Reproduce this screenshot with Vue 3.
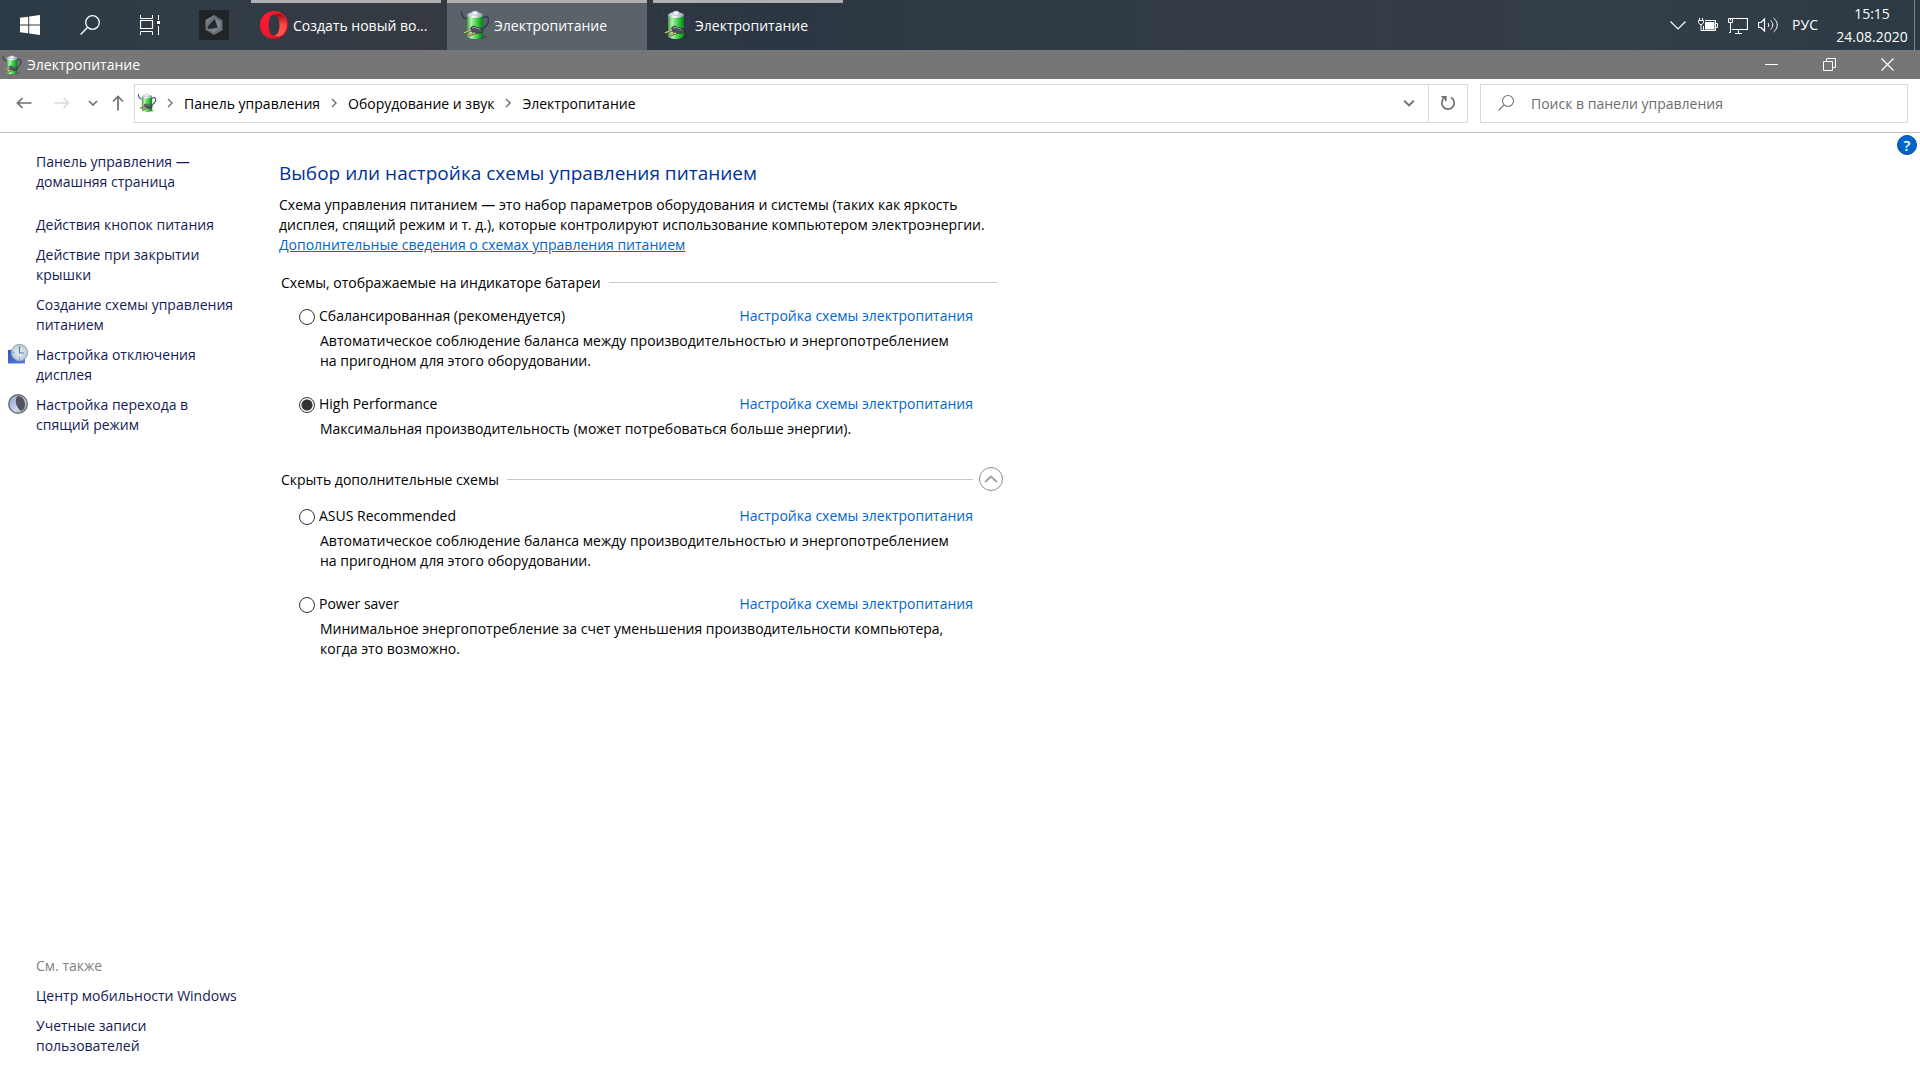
<script setup>
import { ref } from 'vue'

const selected = ref('high')
const expanded = ref(true)
const query = ref('')

const windows = [
  { id: 'opera', title: 'Создать новый во...', icon: 'i-opera' },
  { id: 'power1', title: 'Электропитание', icon: 'i-battery', active: true },
  { id: 'power2', title: 'Электропитание', icon: 'i-battery' }
]

const crumbs = ['Панель управления', 'Оборудование и звук', 'Электропитание']

const home = 'Панель управления —\nдомашняя страница'

const tasks = [
  { text: 'Действия кнопок питания' },
  { text: 'Действие при закрытии\nкрышки' },
  { text: 'Создание схемы управления\nпитанием' },
  { text: 'Настройка отключения\nдисплея', icon: 'i-display' },
  { text: 'Настройка перехода в\nспящий режим', icon: 'i-sleep' }
]

const seeAlso = ['Центр мобильности Windows', 'Учетные записи\nпользователей']

const intro = 'Схема управления питанием — это набор параметров оборудования и системы (таких как яркость\nдисплея, спящий режим и т. д.), которые контролируют использование компьютером электроэнергии.\n'

const mainPlans = [
  {
    id: 'balanced',
    name: 'Сбалансированная (рекомендуется)',
    about: 'Автоматическое соблюдение баланса между производительностью и энергопотреблением\nна пригодном для этого оборудовании.'
  },
  {
    id: 'high',
    name: 'High Performance',
    about: 'Максимальная производительность (может потребоваться больше энергии).'
  }
]

const extraPlans = [
  {
    id: 'asus',
    name: 'ASUS Recommended',
    about: 'Автоматическое соблюдение баланса между производительностью и энергопотреблением\nна пригодном для этого оборудовании.'
  },
  {
    id: 'saver',
    name: 'Power saver',
    about: 'Минимальное энергопотребление за счет уменьшения производительности компьютера,\nкогда это возможно.'
  }
]
</script>

<template>
  <div class="screen">
    <svg class="defs" width="0" height="0" aria-hidden="true">
      <defs>
        <linearGradient id="g-green" x1="0" x2="1" y1="0" y2="0">
          <stop offset="0" stop-color="#3f9a45" />
          <stop offset="0.25" stop-color="#b5f3b0" />
          <stop offset="0.5" stop-color="#5fdb62" />
          <stop offset="0.8" stop-color="#1cb02c" />
          <stop offset="1" stop-color="#0e7a1e" />
        </linearGradient>
        <linearGradient id="g-cap" x1="0" x2="1" y1="0" y2="0">
          <stop offset="0" stop-color="#9aa5b5" />
          <stop offset="0.4" stop-color="#ffffff" />
          <stop offset="1" stop-color="#8391a8" />
        </linearGradient>
        <linearGradient id="g-opera" x1="0" x2="1" y1="0" y2="1">
          <stop offset="0" stop-color="#ff1b2d" />
          <stop offset="0.6" stop-color="#f0182b" />
          <stop offset="1" stop-color="#a70014" />
        </linearGradient>
        <linearGradient id="g-opera2" x1="0" x2="0" y1="0" y2="1">
          <stop offset="0" stop-color="#a00010" />
          <stop offset="0.5" stop-color="#ff4b4b" />
          <stop offset="1" stop-color="#ff5a55" />
        </linearGradient>
        <linearGradient id="g-blue" x1="0" x2="1" y1="0" y2="1">
          <stop offset="0" stop-color="#2f55b8" />
          <stop offset="1" stop-color="#5c7ee0" />
        </linearGradient>
        <radialGradient id="g-clock">
          <stop offset="0" stop-color="#e6f1f8" />
          <stop offset="1" stop-color="#b9cfdc" />
        </radialGradient>
        <linearGradient id="g-moon" x1="0" x2="1" y1="0" y2="1">
          <stop offset="0" stop-color="#8d9cc8" />
          <stop offset="0.6" stop-color="#cbd7f5" />
          <stop offset="1" stop-color="#8a93ae" />
        </linearGradient>
        <linearGradient id="g-hex" x1="0" x2="1" y1="0" y2="1">
          <stop offset="0" stop-color="#8b939b" />
          <stop offset="0.5" stop-color="#596068" />
          <stop offset="1" stop-color="#747d86" />
        </linearGradient>
      </defs>
      <symbol id="i-battery" viewBox="0 0 28 30">
        <ellipse cx="18" cy="27" rx="8" ry="2" fill="#000" opacity="0.2" />
        <path d="M.5 1c0 4 2 7 5 8" fill="none" stroke="#363a60" stroke-width="1.6" />
        <path d="M22 8c3-3 5.500-1 5.500 2 0 5-3.500 7-7.500 9" fill="none" stroke="#363a60" stroke-width="1.6" />
        <path d="M6 5v21c0 1.600 3.500 3 8 3s8-1.400 8-3V5z" fill="url(#g-green)" />
        <ellipse cx="14" cy="5" rx="8" ry="3" fill="url(#g-cap)" />
        <path d="M11 2.500c0-2 6-2 6 0v2c0 1-6 1-6 0z" fill="#eef2fa" stroke="#8d99b0" stroke-width="0.5" />
        <path d="M9.500 18c2-2.500 4-2 6-.5l6.500 1.500c1 2-.5 4-2.500 4-3 .6-6 .5-8.500-1z" fill="#4c505c" stroke="#25272f" stroke-width="0.700" />
        <path d="M11 18l3-.5 5 2" fill="none" stroke="#9a9eaa" />
        <path d="M3 23l7-2.500M8 25.500l6-2.500" stroke="#5d4526" stroke-width="2.200" />
        <path d="M3 22.700l7-2.500M8 25.200l6-2.500" stroke="#ecc893" stroke-width="1.200" />
      </symbol>
      <symbol id="i-opera" viewBox="0 0 28 28">
        <path fill="url(#g-opera)" fill-rule="evenodd" d="M14 0a14 14 0 1 0 0 28 14 14 0 0 0 0-28zM14 3.500c3.800 0 5.600 5 5.600 10.500S17.800 24.500 14 24.500 8.800 19.500 8.800 14 10.200 3.500 14 3.500z" />
        <path fill="url(#g-opera2)" d="M14 3.500c4-2.200 7-.8 9.300 1.200a14 14 0 0 1 0 18.600c-3 2.600-6.300 3-9.300 1.200 3.800 0 5.600-5 5.600-10.500S17.800 3.500 14 3.500z" />
      </symbol>
      <symbol id="i-display" viewBox="0 0 20 20">
        <path d="M0 6l17-1v14.500H0z" fill="url(#g-blue)" />
        <circle cx="11.500" cy="8.500" r="8" fill="url(#g-clock)" stroke="#a2adb3" stroke-width="1.200" />
        <path d="M11.500 3v6H16" fill="none" stroke="#6b7f96" stroke-width="1.200" />
        <path d="M11.500 1.700v1.600M11.500 13.700v1.600M4.700 8.500h1.600" stroke="#7d92a4" />
      </symbol>
      <symbol id="i-sleep" viewBox="0 0 20 20">
        <circle cx="10" cy="10" r="9.300" fill="url(#g-moon)" stroke="#707070" stroke-width="1.400" />
        <path d="M9 2.500c5-1 8 3.500 8 7.500s-1.500 6-4 7c-4-3-7-9-4-14.500z" fill="#50535a" />
      </symbol>
      <symbol id="i-search" viewBox="0 0 20 20">
        <circle cx="12.500" cy="7.500" r="6.800" fill="none" stroke="currentColor" stroke-width="1.300" />
        <path d="M7.700 12.300L.6 19.400" stroke="currentColor" stroke-width="1.400" />
      </symbol>
      <symbol id="i-chevron" viewBox="0 0 10 6">
        <path d="M1 1l4 4 4-4" fill="none" stroke="currentColor" stroke-width="1.700" />
      </symbol>
      <symbol id="i-arrow" viewBox="0 0 16 12">
        <path d="M15.500 6H1.500M6.500 1l-5 5 5 5" fill="none" stroke="currentColor" stroke-width="1.700" />
      </symbol>
    </svg>

    <header class="taskbar">
      <button class="sys start" aria-label="Пуск">
        <svg width="20" height="20" viewBox="0 0 20 20"><path fill="#fff" d="M0 2.800L8.200 1.700v7.800H0zM9.200 1.500L20 0v9.500H9.200zM0 10.500h8.200v7.800L0 17.200zM9.200 10.500H20V20L9.200 18.500z" /></svg>
      </button>
      <button class="sys find" aria-label="Поиск">
        <svg width="20" height="20"><use href="#i-search" /></svg>
      </button>
      <button class="sys view" aria-label="Представление задач">
        <svg width="20" height="20" viewBox="0 0 20 20" fill="none" stroke="#fff">
          <path d="M.5 0v3.500h12V0M.5 20v-3.500h12V20" />
          <path d="M.5 5.500h12v8H.5z" stroke-width="1.200" />
          <path d="M18.500 0v5M18.500 11v9" />
          <path d="M17 6h3v3h-3z" fill="#fff" stroke="none" />
        </svg>
      </button>
      <button class="sys pinned" aria-label="Armoury Crate">
        <svg width="30" height="30" viewBox="0 0 30 30">
          <path fill="#1f2528" d="M0 0h30v30H0z" />
          <path fill="url(#g-hex)" d="M15 5l8.500 5v10L15 25l-8.500-5V10z" />
          <path fill="#22292d" d="M15.500 9l3 8.500-9 1.500-1-2z" />
          <path fill="#a5afba" d="M16 8.500l6 3-2 8z" opacity="0.500" />
          <path fill="#a5afba" d="M8 19.500l12-1.500-5 5z" opacity="0.400" />
        </svg>
      </button>
      <nav class="windows" aria-label="Окна">
        <button v-for="w in windows" :key="w.id" class="window-button" :class="{ active: w.active }">
          <svg width="28" height="30"><use :href="'#' + w.icon" /></svg>
          <span>{{ w.title }}</span>
        </button>
      </nav>
      <div class="tray">
        <button class="tray-icon" aria-label="Скрытые значки">
          <svg width="16" height="9" viewBox="0 0 16 9"><path d="M.5.500L8 8 15.500.500" fill="none" stroke="#fff" stroke-width="1.200" /></svg>
        </button>
        <button class="tray-icon" aria-label="Батарея">
          <svg width="20" height="14" viewBox="0 0 20 14" fill="none" stroke="#fff">
            <path d="M1.500 0v2M4.500 0v2M.5 2.500h5v2l-1.500 2H2l-1.500-2zM3 6.500v6h3" />
            <path d="M7 2.500h10.500v10H5.500V8" /><path d="M18 5.500h1.500v4H18" />
            <path d="M7 4h9.500v7.500H7z" fill="#fff" stroke="none" />
          </svg>
        </button>
        <button class="tray-icon" aria-label="Сеть">
          <svg width="20" height="17" viewBox="0 0 20 17" fill="none" stroke="#fff">
            <path d="M5 1.500h14.500v11H4" stroke-width="1.200" /><path d="M.5 1.500h4v4h-4zM2.500 5.500v10H1M7 16.500h7M10.500 12.500v4M2.500 1.500v2" />
          </svg>
        </button>
        <button class="tray-icon" aria-label="Громкость">
          <svg width="20" height="18" viewBox="0 0 20 18" fill="none" stroke="#fff">
            <path d="M.5 6.500H3L6.500 3v12L3 11.500H.5z" stroke-width="1.200" /><path d="M10 7c1 1 1 3 0 4M12.500 4.500c3 2.500 3 6.500 0 9M15.500 2c5 4 5 10 0 14" />
          </svg>
        </button>
        <button class="lang">РУС</button>
        <button class="clock"><time>15:15</time><span>24.08.2020</span></button>
      </div>
    </header>

    <div class="titlebar">
      <svg width="20" height="20"><use href="#i-battery" /></svg>
      <span class="window-title">Электропитание</span>
      <button aria-label="Свернуть"><svg width="13" height="13" viewBox="0 0 13 13"><path d="M0 6.500h13" stroke="#fff" /></svg></button>
      <button aria-label="Восстановить"><svg width="13" height="13" viewBox="0 0 13 13" fill="none" stroke="#fff"><path d="M.5 3.500h9v9h-9zM3.500 3.500v-3h9v9h-3" /></svg></button>
      <button aria-label="Закрыть"><svg width="13" height="13" viewBox="0 0 13 13"><path d="M.5.500l12 12M12.500.500l-12 12" stroke="#fff" stroke-width="1.200" /></svg></button>
    </div>

    <div class="navbar">
      <button class="nav back" aria-label="Назад"><svg width="16" height="12"><use href="#i-arrow" /></svg></button>
      <button class="nav forward" aria-label="Вперед"><svg width="16" height="12"><use href="#i-arrow" /></svg></button>
      <button class="nav recent" aria-label="Последние страницы"><svg width="10" height="6"><use href="#i-chevron" /></svg></button>
      <button class="nav up" aria-label="Вверх"><svg width="12" height="16" viewBox="0 0 12 16"><path d="M6 15.500v-14M1 6.500l5-5 5 5" fill="none" stroke="currentColor" stroke-width="1.700" /></svg></button>
      <div class="address">
        <svg width="18" height="20"><use href="#i-battery" /></svg>
        <template v-for="c in crumbs" :key="c">
          <svg class="sep" width="6" height="10" viewBox="0 0 6 10"><path d="M1 1l4 4-4 4" fill="none" stroke="#6f6f6f" stroke-width="1.400" /></svg>
          <a href="#">{{ c }}</a>
        </template>
        <button class="history" aria-label="Предыдущие расположения"><svg width="12" height="8"><use href="#i-chevron" /></svg></button>
        <button class="refresh" aria-label="Обновить">
          <svg width="16" height="16" viewBox="0 0 16 16" fill="none" stroke="#707070" stroke-width="1.700"><path d="M11 2.500a6.200 6.200 0 1 1-6.500.300M1.500 1.800h4.300v4.500" /></svg>
        </button>
      </div>
      <label class="search">
        <svg width="16" height="16"><use href="#i-search" /></svg>
        <input v-model="query" type="search" placeholder="Поиск в панели управления" aria-label="Поиск в панели управления" />
      </label>
    </div>

    <div class="content">
      <aside class="sidebar">
        <a class="home" href="#">{{ home }}</a>
        <a v-for="t in tasks" :key="t.text" href="#">
          <svg v-if="t.icon" class="task-icon" width="20" height="20"><use :href="'#' + t.icon" /></svg>{{ t.text }}</a>
        <div class="see-also">
          <span>См. также</span>
          <a v-for="s in seeAlso" :key="s" href="#">{{ s }}</a>
        </div>
      </aside>

      <main class="main">
        <h1>Выбор или настройка схемы управления питанием</h1>
        <p class="intro">{{ intro }}<a href="#">Дополнительные сведения о схемах управления питанием</a></p>

        <section class="group">
          <h2><span>Схемы, отображаемые на индикаторе батареи</span></h2>
          <div v-for="p in mainPlans" :key="p.id" class="plan">
            <div class="plan-row">
              <input :id="p.id" v-model="selected" type="radio" name="plan" :value="p.id" />
              <label :for="p.id">{{ p.name }}</label>
              <a href="#">Настройка схемы электропитания</a>
            </div>
            <p>{{ p.about }}</p>
          </div>
        </section>

        <section class="group extra">
          <h2>
            <span>Скрыть дополнительные схемы</span>
            <button class="toggle" aria-label="Скрыть дополнительные схемы" @click="expanded = !expanded">
              <svg width="14" height="8" viewBox="0 0 14 8"><path d="M1 7l6-5.500L13 7" fill="none" stroke="#a0a0a0" stroke-width="1.800" /></svg>
            </button>
          </h2>
          <template v-if="expanded">
            <div v-for="p in extraPlans" :key="p.id" class="plan">
              <div class="plan-row">
                <input :id="p.id" v-model="selected" type="radio" name="plan" :value="p.id" />
                <label :for="p.id">{{ p.name }}</label>
                <a href="#">Настройка схемы электропитания</a>
              </div>
              <p>{{ p.about }}</p>
            </div>
          </template>
        </section>
      </main>

      <button class="help" aria-label="Справка">?</button>
    </div>
  </div>
</template>

<style>
body {
  margin: 0;
  background: #fff;
}
</style>

<style scoped>
.screen {
  display: flex;
  flex-direction: column;
  min-height: 100vh;
  font: 14px/20px "Open Sans", "Noto Sans", sans-serif;
  color: #000;
}

.defs {
  position: absolute;
}

svg {
  display: block;
  flex: none;
}

button {
  display: flex;
  align-items: center;
  justify-content: center;
  padding: 0;
  border: 0;
  background: none;
  color: inherit;
  font: inherit;
}

a {
  text-decoration: none;
}

.taskbar {
  display: flex;
  height: 50px;
  background: linear-gradient(90deg, #2c3b46 0, #303c46 10%, #353a42 22%, #2f3942 30%, #2b3643 41%, #2f3a43 50%, #343c45 72%, #333e47 85%, #2c3a45 100%);
  color: #fff;
}

.sys {
  width: 60px;
}

.pinned {
  width: 68px;
}

.windows {
  display: flex;
  gap: 6px;
  margin-left: 3px;
}

.window-button {
  justify-content: flex-start;
  gap: 5px;
  width: 190px;
  padding: 0 0 3px 9px;
  border-top: 3px solid #b0b0b0;
  white-space: nowrap;
}

.window-button span {
  padding-top: 2px;
}

.window-button.active {
  width: 200px;
  padding-left: 14px;
  background: #5a626a;
}

.tray {
  display: flex;
  align-items: center;
  gap: 10px;
  margin-left: auto;
  margin-right: 5px;
  border-right: 1px solid #7d868d;
}

.tray-icon {
  width: 20px;
}

.lang {
  margin: 0 8px 0 4px;
}

.clock {
  flex-direction: column;
  width: 72px;
  margin-right: 6px;
  line-height: 23px;
}

.titlebar {
  display: flex;
  align-items: center;
  height: 29px;
  padding-left: 2px;
  background: #767676;
  color: #fff;
}

.window-title {
  flex: 1;
  padding-left: 5px;
}

.titlebar button {
  width: 58px;
  height: 29px;
}

.titlebar button:last-child {
  margin-right: 4px;
}

.navbar {
  display: flex;
  align-items: center;
  height: 48px;
  padding: 0 12px 5px 16px;
  border-bottom: 1px solid #bfbfbf;
  color: #6f6f6f;
}

.nav {
  height: 39px;
}

.back {
  width: 16px;
}

.forward {
  width: 16px;
  margin-left: 22px;
  color: #d9d9d9;
}

.forward svg {
  transform: scaleX(-1);
}

.recent {
  width: 10px;
  margin-left: 18px;
}

.up {
  width: 12px;
  margin: 0 10px 0 14px;
}

.address {
  display: flex;
  align-items: center;
  flex: 1;
  box-sizing: border-box;
  height: 39px;
  padding-left: 3px;
  border: 1px solid #d9d9d9;
}

.address a {
  padding-top: 2px;
  color: #000;
}

.sep {
  margin: 0 11px;
}

.history {
  width: 38px;
  height: 37px;
  margin-left: auto;
}

.refresh {
  width: 39px;
  height: 37px;
  border-left: 1px solid #d9d9d9;
}

.search {
  display: flex;
  align-items: center;
  gap: 17px;
  box-sizing: border-box;
  width: 428px;
  height: 39px;
  margin-left: 12px;
  padding-left: 17px;
  border: 1px solid #d9d9d9;
}

.search input {
  flex: 1;
  min-width: 0;
  padding: 2px 0 0;
  border: 0;
  outline: 0;
  background: none;
  font: inherit;
}

.search input::placeholder {
  color: #6d6d6d;
  opacity: 1;
}

.content {
  display: flex;
  flex: 1;
}

.sidebar {
  display: flex;
  flex-direction: column;
  gap: 10px;
  box-sizing: border-box;
  width: 279px;
  padding: 19px 0 24px 36px;
  white-space: pre-line;
}

.sidebar a {
  position: relative;
  color: #151c55;
}

.sidebar .home {
  margin-bottom: 13px;
}

.task-icon {
  position: absolute;
  left: -28px;
  top: -1px;
}

.see-also {
  display: flex;
  flex-direction: column;
  gap: 10px;
  margin-top: auto;
  color: #808080;
}

.main {
  width: 724px;
  padding-top: 26px;
}

h1 {
  margin: 0 0 8px;
  font-size: 19px;
  font-weight: 400;
  line-height: 28px;
  color: #003399;
}

p {
  margin: 0;
  white-space: pre-line;
}

.main a {
  color: #0066cc;
}

.intro a {
  text-decoration: underline;
}

.group {
  margin-top: 17px;
  padding-left: 2px;
}

h2 {
  display: flex;
  align-items: center;
  height: 20px;
  margin: 0 6px 14px 0;
  font-size: 14px;
  font-weight: 400;
}

h2 span {
  padding-top: 2px;
}

h2::after {
  content: "";
  flex: 1;
  order: 1;
  height: 1px;
  margin-left: 8px;
  background: #c8c8c8;
}

.extra {
  margin-top: 30px;
}

.extra h2 {
  margin: 0 0 17px;
}

.toggle {
  order: 2;
  box-sizing: border-box;
  width: 24px;
  height: 24px;
  margin-left: 6px;
  border: 1px solid #8f8f8f;
  border-radius: 12px;
}

.plan {
  padding-left: 18px;
}

.plan + .plan {
  margin-top: 23px;
}

.plan-row {
  display: flex;
  align-items: center;
  height: 20px;
  margin-bottom: 5px;
}

.plan-row a {
  margin: 0 30px 0 auto;
}

.plan-row input {
  appearance: none;
  box-sizing: border-box;
  width: 16px;
  height: 16px;
  margin: 2px 4px 0 0;
  border: 1px solid #333;
  border-radius: 50%;
}

.plan-row input:checked {
  background: radial-gradient(circle, #333 5px, transparent 6px);
}

.plan p {
  padding-left: 21px;
}

.help {
  width: 20px;
  height: 20px;
  margin: 2px 3px 0 auto;
  border: 1px solid #0a4a94;
  border-radius: 50%;
  background: #0066cc;
  color: #fff;
  font-size: 15px;
  font-weight: 600;
}
</style>
